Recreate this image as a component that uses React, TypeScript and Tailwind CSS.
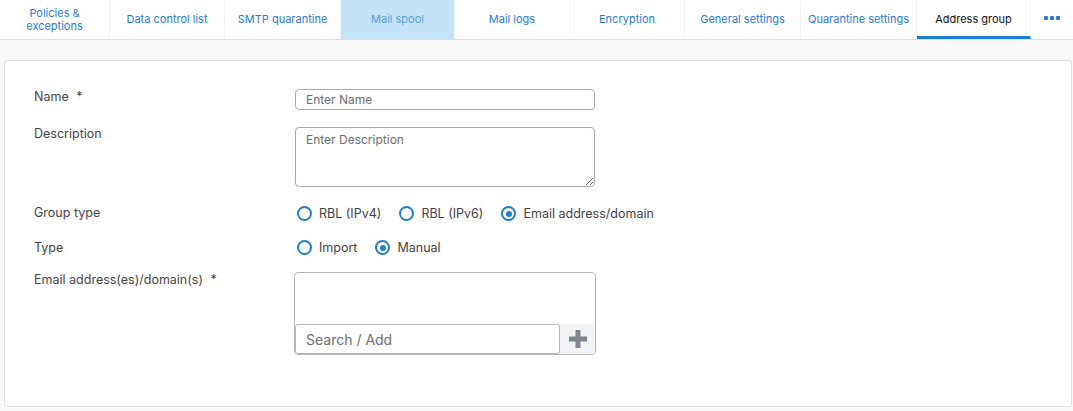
import React from "react";

const tabs = [
  { label: "Policies & exceptions", w: "w-[110px]" },
  { label: "Data control list", w: "w-[115px]" },
  { label: "SMTP quarantine", w: "w-[116px]" },
  { label: "Mail spool", w: "w-[114px]", hover: true },
  { label: "Mail logs", w: "w-[115px]" },
  { label: "Encryption", w: "w-[115px]" },
  { label: "General settings", w: "w-[116px]" },
  { label: "Quarantine settings", w: "w-[116px]" },
  { label: "Address group", w: "w-[114px]", active: true },
];

function Radio({ label, checked }: { label: string; checked?: boolean }) {
  return (
    <label className="flex items-center gap-[7px] h-[15px] leading-[15px] text-[12.5px] text-[#3f3f3f]">
      <span className="w-[15px] h-[15px] rounded-full border-2 border-[#1c7fcd] flex items-center justify-center bg-white">
        {checked && <span className="w-[6px] h-[6px] rounded-full bg-[#1c7fcd]" />}
      </span>
      {label}
    </label>
  );
}

function Row({ label, h, children }: { label: React.ReactNode; h: string; children: React.ReactNode }) {
  return (
    <div className={`flex items-start ${h}`}>
      <div className="w-[261px] shrink-0 leading-[15px]">{label}</div>
      <div>{children}</div>
    </div>
  );
}

export default function App() {
  return (
    <div className="w-[1073px] h-[411px] bg-[#f9f9f9] overflow-hidden font-['Inter',sans-serif]">
      {/* Tabs */}
      <div className="flex h-[40px] bg-white border-b border-[#dedede]">
        {tabs.map((t) => (
          <div
            key={t.label}
            className={`${t.w} shrink-0 flex items-center justify-center text-center text-[11px] leading-[13px] px-[8px] border-r border-[#f3f3f3] ${
              t.hover ? "bg-[#c2e3f8] !text-[#5c9fd6]" : ""
            } ${t.active ? "text-[#111] border-b-[3px] border-b-[#1c7fcd] pt-[2px]" : "text-[#2b7bd0]"} ${
              t.label === "Quarantine settings" ? "!px-0 whitespace-nowrap" : ""
            }`}
          >
            {t.label}
          </div>
        ))}
        <div className="flex-1 flex items-center justify-center gap-[2px] pb-[4px]">
          <span className="w-[4px] h-[4px] bg-[#2b7bd0] rounded-[1px]" />
          <span className="w-[4px] h-[4px] bg-[#2b7bd0] rounded-[1px]" />
          <span className="w-[4px] h-[4px] bg-[#2b7bd0] rounded-[1px]" />
        </div>
      </div>

      {/* Card */}
      <div className="mt-[20px] ml-[4px] w-[1068px] h-[347px] bg-white border border-[#dedede] rounded-[3px] pl-[29px] pt-[28px] text-[12.5px] text-[#444]">
        <Row h="h-[38px]" label={<>Name <span className="ml-[4px]">*</span></>}>
          <input
            placeholder="Enter Name"
            className="w-[300px] h-[21px] border border-[#a9a9a9] rounded-[4px] px-[10px] text-[12px] placeholder:text-[#6e6e6e] outline-none"
          />
        </Row>

        <Row h="h-[78px]" label={<span className="block -mt-[1px]">Description</span>}>
          <textarea
            placeholder="Enter Description"
            className="block w-[300px] h-[60px] border border-[#a9a9a9] rounded-[4px] px-[10px] pt-[3px] text-[12px] placeholder:text-[#6e6e6e] outline-none resize"
          />
        </Row>

        <Row h="h-[35px]" label="Group type">
          <div className="flex gap-[18px] pl-[2px] pt-[1px]">
            <Radio label="RBL (IPv4)" />
            <Radio label="RBL (IPv6)" />
            <Radio label="Email address/domain" checked />
          </div>
        </Row>

        <Row h="h-[32px]" label="Type">
          <div className="flex gap-[18px] pl-[2px]">
            <Radio label="Import" />
            <Radio label="Manual" checked />
          </div>
        </Row>

        <Row h="h-[90px]" label={<>Email address(es)/domain(s) <span className="ml-[4px]">*</span></>}>
          <div className="w-[302px] h-[83px] -ml-[1px] border border-[#b5b5b5] rounded-[4px] flex flex-col justify-end overflow-hidden">
            <div className="flex h-[30px] bg-[#f3f4f6]">
              <input
                placeholder="Search / Add"
                className="w-[265px] h-[30px] bg-white border border-[#b5b5b5] rounded-[3px] px-[10px] text-[14px] placeholder:text-[#6e6e6e] outline-none"
              />
              <div className="flex-1 flex items-center justify-center">
                <svg width="20" height="20" viewBox="0 0 20 20">
                  <rect x="7.5" y="1" width="5" height="18" fill="#7d8590" />
                  <rect x="1" y="7.5" width="18" height="5" fill="#7d8590" />
                </svg>
              </div>
            </div>
          </div>
        </Row>
      </div>
    </div>
  );
}
